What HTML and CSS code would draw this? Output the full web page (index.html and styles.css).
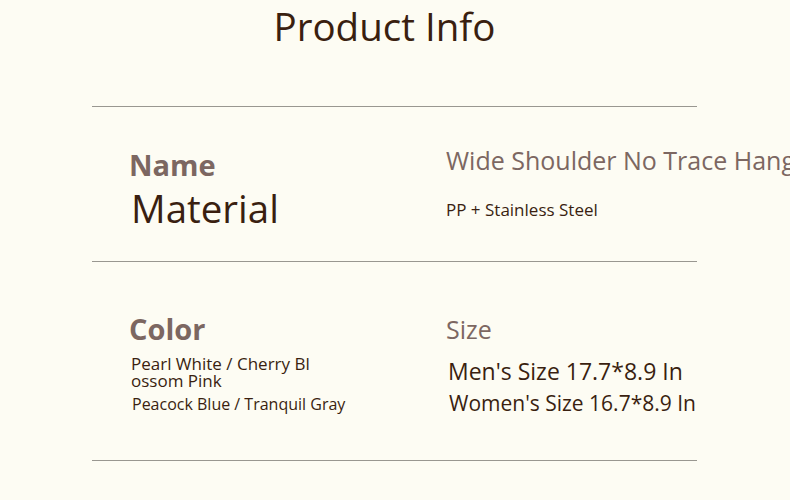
FILE: index.html
```html
<!DOCTYPE html>
<html>
<head>
<meta charset="utf-8">
<link rel="stylesheet" href="styles.css">
</head>
<body>
<div class="page">
  <h1 class="title">Product Info</h1>
  <div class="table">
    <div class="row row-top">
      <div class="cell cell-left">
        <div class="label label-name">Name</div>
        <div class="value-big">Material</div>
      </div>
      <div class="cell cell-right">
        <div class="label-light">Wide Shoulder No Trace Hangers</div>
        <div class="value-small">PP + Stainless Steel</div>
      </div>
    </div>
    <div class="row row-bottom">
      <div class="cell cell-left">
        <div class="label label-color">Color</div>
        <div class="colors">
          <div class="color-line wrap">Pearl White / Cherry Blossom Pink</div>
          <div class="color-line nowrap">Peacock Blue / Tranquil Gray</div>
        </div>
      </div>
      <div class="cell cell-right">
        <div class="label-light label-size">Size</div>
        <div class="sizes">
          <div class="size-line">Men's Size 17.7*8.9 In</div>
          <div class="size-line size-women">Women's Size 16.7*8.9 In</div>
        </div>
      </div>
    </div>
  </div>
</div>
</body>
</html>
```
FILE: styles.css
```css
html, body {
  margin: 0;
  padding: 0;
  background: #fdfcf3;
  overflow: hidden;
}
body {
  font-family: "Open Sans", "Noto Sans", sans-serif;
  color: #3a1f10;
  width: 790px;
  height: 500px;
}
.page {
  padding-left: 92px;
  width: 605px;
}
.title {
  margin: 0;
  font-weight: 400;
  font-size: 38.5px;
  line-height: 52px;
  text-align: center;
  padding-right: 20px;
  color: #3a1f10;
}
.table {
  margin-top: 54px;
  border-top: 1px solid #999790;
}
.row {
  display: flex;
  border-bottom: 1px solid #999790;
}
.row-top { height: 154px; }
.row-bottom { height: 198px; }
.cell-left {
  flex: 0 0 354px;
  padding-left: 37px;
  box-sizing: border-box;
}
.cell-right {
  flex: 0 0 344px;
  overflow: hidden;
  white-space: nowrap;
}
.label {
  font-weight: 700;
  color: #7c6761;
}
.label-name {
  font-size: 29px;
  line-height: 36px;
  margin-top: 40px;
}
.value-big {
  font-size: 38.5px;
  line-height: 48px;
  padding-left: 2px;
  margin-top: 1px;
}
.label-light {
  color: #7c6761;
  font-size: 25px;
  line-height: 32px;
  margin-top: 37px;
}
.value-small {
  font-size: 17px;
  line-height: 22px;
  margin-top: 23px;
}
.label-color {
  font-size: 29px;
  line-height: 38px;
  margin-top: 48px;
}
.colors {
  padding-left: 2px;
  margin-top: 7px;
  width: 182px;
}
.color-line {
  font-size: 17px;
  line-height: 17px;
}
.wrap { word-break: break-all; }
.nowrap {
  white-space: nowrap;
  font-size: 16px;
  padding-left: 1px;
}
.color-line + .color-line {
  margin-top: 7px;
}
.label-size {
  margin-top: 51px;
}
.sizes {
  margin-top: 10px;
  padding-left: 2px;
}
.size-line {
  font-size: 23px;
  line-height: 33px;
}
.size-women {
  padding-left: 1px;
  font-size: 21px;
  line-height: 31px;
}
```
